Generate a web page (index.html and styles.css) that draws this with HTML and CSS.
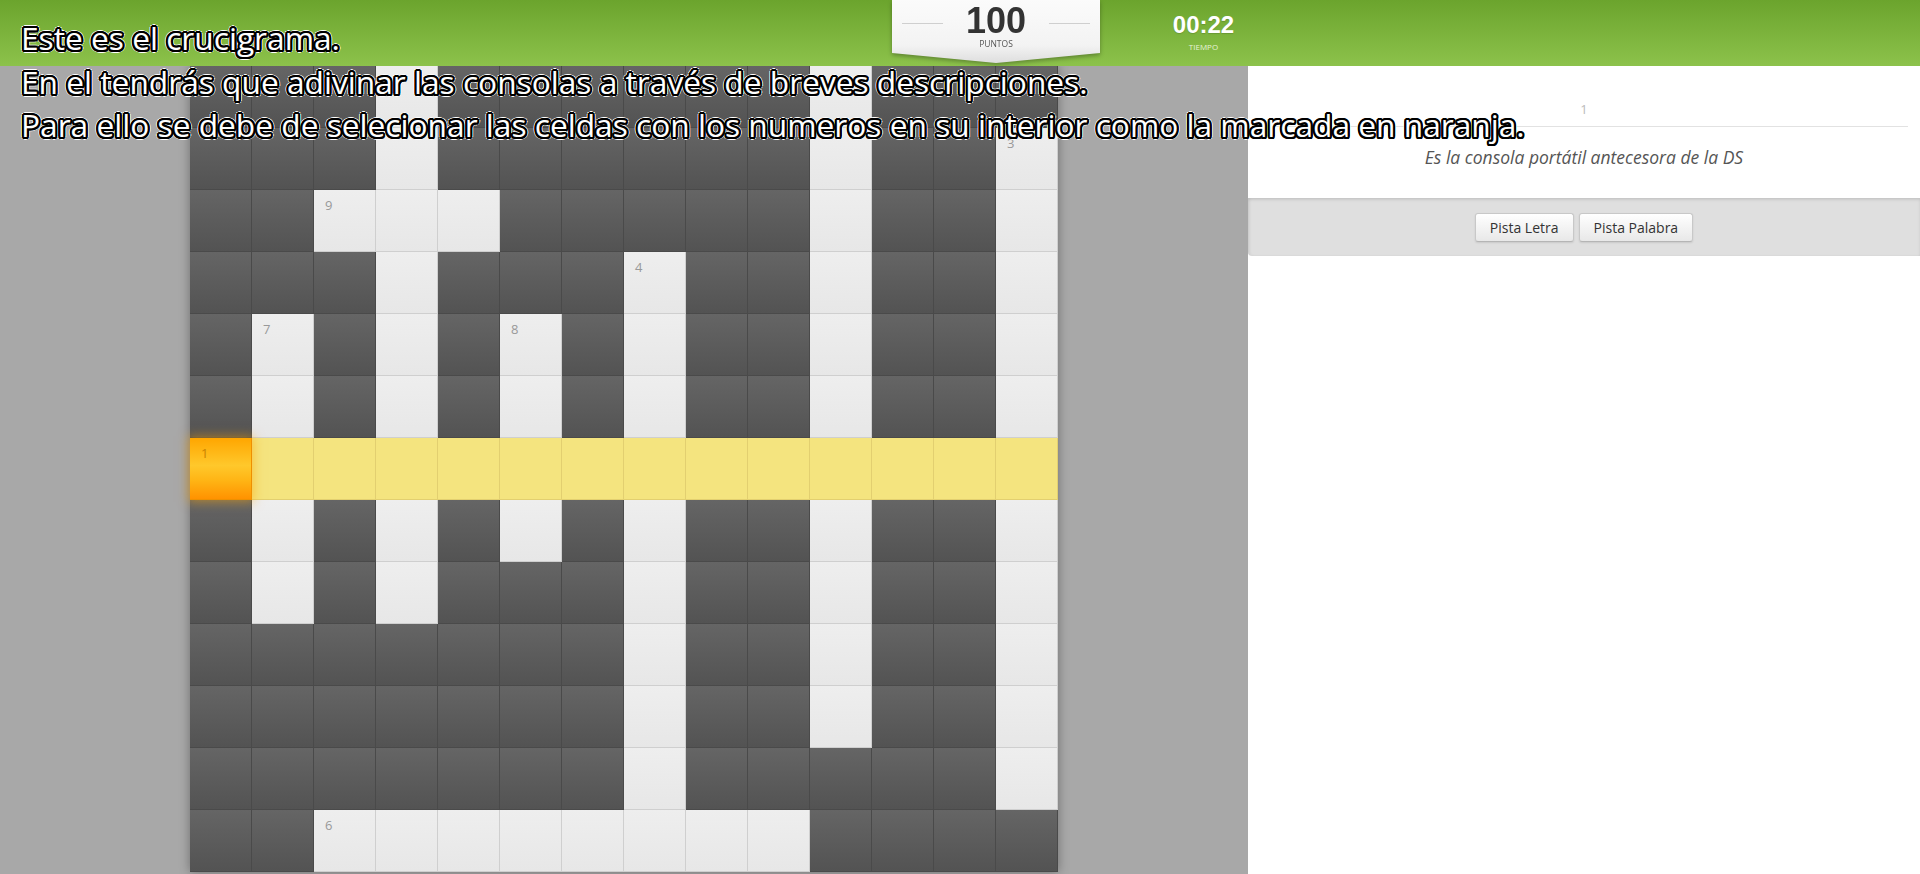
FILE: index.html
```html
<!DOCTYPE html>
<html lang="es">
<head>
<meta charset="utf-8">
<title>Crucigrama</title>
<link rel="stylesheet" href="styles.css">
</head>
<body>
<header class="topbar">
  <div class="score-wrap">
    <div class="score">
      <div class="score-row"><span class="rule"></span><span class="points">100</span><span class="rule"></span></div>
      <div class="score-label">PUNTOS</div>
    </div>
  </div>
  <div class="timer">
    <div class="time">00:22</div>
    <div class="time-label">TIEMPO</div>
  </div>
</header>
<main class="layout">
  <section class="board">
    <div class="grid">
      <div class="c d"></div><div class="c d"></div><div class="c d"></div><div class="c w"></div><div class="c d"></div><div class="c d"></div><div class="c d"></div><div class="c d"></div><div class="c d"></div><div class="c d"></div><div class="c w"></div><div class="c d"></div><div class="c d"></div><div class="c d"></div>
      <div class="c d"></div><div class="c d"></div><div class="c d"></div><div class="c w"></div><div class="c d"></div><div class="c d"></div><div class="c d"></div><div class="c d"></div><div class="c d"></div><div class="c d"></div><div class="c w"></div><div class="c d"></div><div class="c d"></div><div class="c w">3</div>
      <div class="c d"></div><div class="c d"></div><div class="c w">9</div><div class="c w"></div><div class="c w"></div><div class="c d"></div><div class="c d"></div><div class="c d"></div><div class="c d"></div><div class="c d"></div><div class="c w"></div><div class="c d"></div><div class="c d"></div><div class="c w"></div>
      <div class="c d"></div><div class="c d"></div><div class="c d"></div><div class="c w"></div><div class="c d"></div><div class="c d"></div><div class="c d"></div><div class="c w">4</div><div class="c d"></div><div class="c d"></div><div class="c w"></div><div class="c d"></div><div class="c d"></div><div class="c w"></div>
      <div class="c d"></div><div class="c w">7</div><div class="c d"></div><div class="c w"></div><div class="c d"></div><div class="c w">8</div><div class="c d"></div><div class="c w"></div><div class="c d"></div><div class="c d"></div><div class="c w"></div><div class="c d"></div><div class="c d"></div><div class="c w"></div>
      <div class="c d"></div><div class="c w"></div><div class="c d"></div><div class="c w"></div><div class="c d"></div><div class="c w"></div><div class="c d"></div><div class="c w"></div><div class="c d"></div><div class="c d"></div><div class="c w"></div><div class="c d"></div><div class="c d"></div><div class="c w"></div>
      <div class="c o">1</div><div class="c y"></div><div class="c y"></div><div class="c y"></div><div class="c y"></div><div class="c y"></div><div class="c y"></div><div class="c y"></div><div class="c y"></div><div class="c y"></div><div class="c y"></div><div class="c y"></div><div class="c y"></div><div class="c y"></div>
      <div class="c d"></div><div class="c w"></div><div class="c d"></div><div class="c w"></div><div class="c d"></div><div class="c w"></div><div class="c d"></div><div class="c w"></div><div class="c d"></div><div class="c d"></div><div class="c w"></div><div class="c d"></div><div class="c d"></div><div class="c w"></div>
      <div class="c d"></div><div class="c w"></div><div class="c d"></div><div class="c w"></div><div class="c d"></div><div class="c d"></div><div class="c d"></div><div class="c w"></div><div class="c d"></div><div class="c d"></div><div class="c w"></div><div class="c d"></div><div class="c d"></div><div class="c w"></div>
      <div class="c d"></div><div class="c d"></div><div class="c d"></div><div class="c d"></div><div class="c d"></div><div class="c d"></div><div class="c d"></div><div class="c w"></div><div class="c d"></div><div class="c d"></div><div class="c w"></div><div class="c d"></div><div class="c d"></div><div class="c w"></div>
      <div class="c d"></div><div class="c d"></div><div class="c d"></div><div class="c d"></div><div class="c d"></div><div class="c d"></div><div class="c d"></div><div class="c w"></div><div class="c d"></div><div class="c d"></div><div class="c w"></div><div class="c d"></div><div class="c d"></div><div class="c w"></div>
      <div class="c d"></div><div class="c d"></div><div class="c d"></div><div class="c d"></div><div class="c d"></div><div class="c d"></div><div class="c d"></div><div class="c w"></div><div class="c d"></div><div class="c d"></div><div class="c d"></div><div class="c d"></div><div class="c d"></div><div class="c w"></div>
      <div class="c d"></div><div class="c d"></div><div class="c w">6</div><div class="c w"></div><div class="c w"></div><div class="c w"></div><div class="c w"></div><div class="c w"></div><div class="c w"></div><div class="c w"></div><div class="c d"></div><div class="c d"></div><div class="c d"></div><div class="c d"></div>
    </div>
  </section>
  <aside class="panel">
    <div class="clue">
      <div class="clue-num">1</div>
      <p class="clue-text">Es la consola portátil antecesora de la DS</p>
    </div>
    <div class="actions">
      <button class="btn">Pista Letra</button>
      <button class="btn">Pista Palabra</button>
    </div>
  </aside>
</main>
<div class="instructions">
  <p>Este es el crucigrama.</p>
  <p>En el tendrás que adivinar las consolas a través de breves descripciones.</p>
  <p>Para ello se debe de selecionar las celdas con los numeros en su interior como la marcada en naranja.</p>
</div>
</body>
</html>
```

FILE: styles.css
```css
html, body {
  margin: 0;
  height: 874px;
  overflow: hidden;
}
body {
  font-family: "Open Sans", "Liberation Sans", sans-serif;
  background: #a8a8a8;
  position: relative;
}

/* Header */
.topbar {
  height: 66px;
  display: flex;
  align-items: flex-start;
  padding-left: 892px;
  background: linear-gradient(#6ba42d, #8cc24b);
  position: relative;
  z-index: 2;
}
.score-wrap {
  width: 208px;
  filter: drop-shadow(0 2px 2px rgba(0, 0, 0, 0.3));
}
.score {
  box-sizing: border-box;
  height: 63px;
  padding: 3px 10px 0;
  clip-path: polygon(0 0, 100% 0, 100% 53px, 50% 63px, 0 53px);
  background: linear-gradient(#fbfbfb, #f3f3f3 72%, #dedede);
}
.score-row {
  display: flex;
  justify-content: space-between;
  align-items: flex-start;
}
.rule {
  width: 41px;
  height: 1px;
  margin-top: 20px;
  background: #cfcfcf;
}
.points {
  font: bold 36px/36px "Liberation Sans", Arial, sans-serif;
  color: #333;
}
.score-label {
  text-align: center;
  font-size: 8.5px;
  line-height: 10px;
  color: #555;
}
.timer {
  margin-left: 72px;
  width: 63px;
  padding-top: 13px;
  text-align: center;
}
.time {
  font: bold 24px/24px "Liberation Sans", Arial, sans-serif;
  color: #fff;
  text-shadow: 0 1px 1px rgba(0, 0, 0, 0.15);
}
.time-label {
  margin-top: 5px;
  font-size: 8px;
  line-height: 10px;
  color: #e6f2d8;
}

/* Main layout */
.layout {
  display: flex;
  height: 808px;
}
.board {
  flex: 1;
  display: flex;
  justify-content: center;
  align-items: flex-start;
  background: #a8a8a8;
}
.grid {
  display: grid;
  grid-template-columns: repeat(14, 62px);
  grid-auto-rows: 62px;
  box-shadow: 0 0 10px rgba(0, 0, 0, 0.35);
}
.c {
  box-sizing: border-box;
  border-right: 1px solid;
  border-bottom: 1px solid;
  padding: 9px 0 0 11px;
  font-size: 13px;
  line-height: 13px;
  color: #999;
}
.d {
  background: linear-gradient(#656565, #535353);
  border-color: #4a4a4a;
}
.w {
  background: linear-gradient(#eeeeee, #e7e7e7);
  border-color: #cfcfcf;
}
.y {
  background: #f4e47f;
  border-color: #e2cf70;
}
.o {
  background: linear-gradient(#ffa600, #ffc82b 45%, #ffb414 70%, #ff9200);
  border-color: #ee9000;
  box-shadow: 0 0 10px 2px rgba(255, 165, 0, 0.5);
  position: relative;
  z-index: 1;
  color: #c98300;
}

/* Right panel */
.panel {
  width: 672px;
  background: #fff;
}
.clue {
  padding: 35px 12px 31px;
  text-align: center;
}
.clue-num {
  font-size: 13px;
  line-height: 16px;
  color: #bbb;
  padding-bottom: 9px;
  border-bottom: 1px solid #e2e2e2;
}
.clue-text {
  margin: 20px 0 0;
  font-style: italic;
  font-size: 17.5px;
  line-height: 20px;
  color: #555;
}
.actions {
  height: 58px;
  display: flex;
  justify-content: center;
  align-items: center;
  gap: 5px;
  background: #dfdfdf;
  border-radius: 0 0 0 4px;
  box-shadow: inset 0 2px 3px rgba(0, 0, 0, 0.1), inset 2px 0 3px rgba(0, 0, 0, 0.05);
}
.btn {
  height: 29px;
  padding: 0 14px;
  font-family: "Open Sans", "Liberation Sans", sans-serif;
  font-size: 14px;
  color: #333;
  background: linear-gradient(#ffffff, #e8e8e8);
  border: 1px solid #c8c8c8;
  border-bottom-color: #b5b5b5;
  border-radius: 3px;
  box-shadow: 0 1px 2px rgba(0, 0, 0, 0.1);
}

/* Overlay instructions */
.instructions {
  position: absolute;
  top: 16px;
  left: 21px;
  z-index: 5;
  font-size: 31.7px;
  line-height: 43.5px;
  color: #fff;
  text-shadow:
    2px 0 0 #000, -2px 0 0 #000, 0 2px 0 #000, 0 -2px 0 #000,
    1.5px 1.5px 0 #000, -1.5px 1.5px 0 #000, 1.5px -1.5px 0 #000, -1.5px -1.5px 0 #000,
    2px 1px 0 #000, -2px 1px 0 #000, 2px -1px 0 #000, -2px -1px 0 #000,
    1px 2px 0 #000, -1px 2px 0 #000, 1px -2px 0 #000, -1px -2px 0 #000,
    3px 0 0 #fff, -3px 0 0 #fff, 0 3px 0 #fff, 0 -3px 0 #fff,
    2.2px 2.2px 0 #fff, -2.2px 2.2px 0 #fff, 2.2px -2.2px 0 #fff, -2.2px -2.2px 0 #fff;
}
.instructions p {
  margin: 0;
  white-space: nowrap;
}
```
